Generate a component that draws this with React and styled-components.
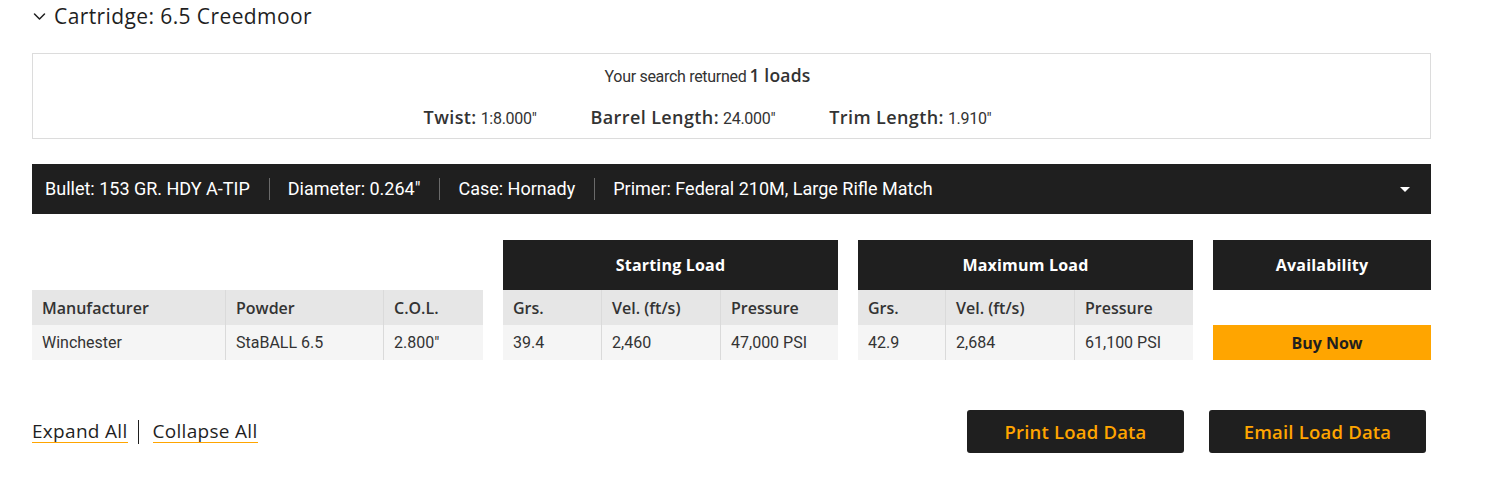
import React from "react";
import styled, { createGlobalStyle } from "styled-components";

const Global = createGlobalStyle`
  html, body { margin: 0; padding: 0; background: #fff; }
  body { font-family: Roboto, "Liberation Sans", sans-serif; color: #333; }
`;

const HEAD = `"Open Sans", "Liberation Sans", sans-serif`;

const Page = styled.div`
  padding: 0 62px 0 32px;
  width: 1399px;
`;

const Title = styled.h2`
  margin: 0;
  height: 32px;
  display: flex;
  align-items: center;
  gap: 7px;
  font-family: ${HEAD};
  font-weight: 500;
  font-size: 21px;
  color: #1f1f1f;
  letter-spacing: 0.4px;
`;

const Summary = styled.div`
  margin-top: 21px;
  border: 1px solid #dcdcdc;
  height: 84px;
  padding-right: 48px;
  display: flex;
  flex-direction: column;
  align-items: center;
`;

const Returned = styled.div`
  margin-top: 9px;
  font-size: 16px;
  color: #333;
  letter-spacing: -0.3px;
  b {
    font-family: ${HEAD};
    font-weight: 600;
    font-size: 17.5px;
    letter-spacing: 0.2px;
    margin-left: 3px;
  }
`;

const Specs = styled.div`
  margin-top: 18px;
  display: flex;
  gap: 54px;
`;

const Spec = styled.div`
  font-size: 16px;
  color: #333;
  letter-spacing: -0.3px;
  b {
    font-family: ${HEAD};
    font-weight: 600;
    font-size: 18px;
    letter-spacing: 0.4px;
    margin-right: 4px;
  }
`;

const InfoBar = styled.div`
  margin-top: 25px;
  height: 50px;
  background: #1f1f1f;
  display: flex;
  align-items: center;
  padding: 0 21px 0 13px;
  color: #fff;
  font-size: 18px;
`;

const InfoItem = styled.span`
  padding: 0 19px 0 18px;
  border-left: 1px solid #6a6a6a;
  line-height: 22px;
  &:first-child { padding-left: 0; border-left: none; }
`;

const Caret = styled.span`
  margin-left: auto;
  width: 0;
  height: 0;
  border-left: 5px solid transparent;
  border-right: 5px solid transparent;
  border-top: 5px solid #fff;
`;

const Tables = styled.div`
  margin-top: 26px;
  display: flex;
  gap: 20px;
`;

const Group = styled.div`
  width: ${(p) => p.$w}px;
  display: flex;
  flex-direction: column;
`;

const GroupHead = styled.div`
  height: 50px;
  background: ${(p) => (p.$blank ? "transparent" : "#1f1f1f")};
  color: #fff;
  display: flex;
  align-items: center;
  justify-content: center;
  font-family: ${HEAD};
  font-weight: 700;
  font-size: 16px;
  letter-spacing: 0.2px;
`;

const Row = styled.div`
  display: grid;
  grid-template-columns: ${(p) => p.$cols};
  height: 35px;
  background: ${(p) => (p.$head ? "#e6e6e6" : "#f5f5f5")};
`;

const Cell = styled.div`
  display: flex;
  align-items: center;
  padding-left: 10px;
  border-left: 1px solid #dadada;
  &:first-child { border-left: none; }
  font-size: 16px;
  color: #333;
  ${(p) =>
    p.$head &&
    `font-family: ${HEAD}; font-weight: 600; font-size: 16px; color: #333;`}
`;

const Spacer = styled.div`
  height: 35px;
`;

const BuyNow = styled.button`
  height: 35px;
  border: none;
  background: #ffa500;
  color: #1f1f1f;
  font-family: ${HEAD};
  font-weight: 700;
  font-size: 16px;
  cursor: pointer;
  padding: 0;
  padding-left: 10px;
`;

const Footer = styled.div`
  margin-top: 50px;
  display: flex;
  align-items: center;
`;

const LinkRow = styled.div`
  display: flex;
  align-items: center;
`;

const TextLink = styled.a`
  font-family: ${HEAD};
  font-weight: 500;
  font-size: 19px;
  letter-spacing: 0.3px;
  color: #1f1f1f;
  text-decoration: none;
  border-bottom: 1.5px solid #ffa500;
  line-height: 22px;
`;

const Divider = styled.span`
  width: 1px;
  height: 24px;
  background: #1f1f1f;
  margin: 0 14px 0 10px;
`;

const Buttons = styled.div`
  margin-left: auto;
  display: flex;
  gap: 25px;
  margin-right: 5px;
`;

const ActionButton = styled.button`
  width: 217px;
  height: 43px;
  border: none;
  border-radius: 3px;
  background: #1f1f1f;
  color: #ffa500;
  font-family: ${HEAD};
  font-weight: 600;
  font-size: 18.5px;
  letter-spacing: 0.2px;
  cursor: pointer;
`;

const Chevron = () => (
  <svg width="15" height="15" viewBox="0 0 24 24" fill="none" stroke="#1f1f1f" strokeWidth="2.4" strokeLinecap="round" strokeLinejoin="round">
    <path d="M4 8l8 8 8-8" />
  </svg>
);

const left = { cols: "193px 158px 100px", head: ["Manufacturer", "Powder", "C.O.L."], row: ["Winchester", "StaBALL 6.5", "2.800\""] };
const start = { title: "Starting Load", cols: "98px 119px 118px", head: ["Grs.", "Vel. (ft/s)", "Pressure"], row: ["39.4", "2,460", "47,000 PSI"] };
const max = { title: "Maximum Load", cols: "87px 129px 119px", head: ["Grs.", "Vel. (ft/s)", "Pressure"], row: ["42.9", "2,684", "61,100 PSI"] };

const DataGroup = ({ w, d }) => (
  <Group $w={w}>
    <GroupHead $blank={!d.title}>{d.title}</GroupHead>
    <Row $head $cols={d.cols}>
      {d.head.map((h) => (
        <Cell $head key={h}>{h}</Cell>
      ))}
    </Row>
    <Row $cols={d.cols}>
      {d.row.map((v) => (
        <Cell key={v}>{v}</Cell>
      ))}
    </Row>
  </Group>
);

export default function App() {
  return (
    <>
      <Global />
      <Page>
        <Title>
          <Chevron />
          Cartridge: 6.5 Creedmoor
        </Title>
        <Summary>
          <Returned>
            Your search returned<b>1 loads</b>
          </Returned>
          <Specs>
            <Spec><b>Twist:</b>1:8.000"</Spec>
            <Spec><b>Barrel Length:</b>24.000"</Spec>
            <Spec><b>Trim Length:</b>1.910"</Spec>
          </Specs>
        </Summary>
        <InfoBar>
          <InfoItem>Bullet: 153 GR. HDY A-TIP</InfoItem>
          <InfoItem>Diameter: 0.264"</InfoItem>
          <InfoItem>Case: Hornady</InfoItem>
          <InfoItem>Primer: Federal 210M, Large Rifle Match</InfoItem>
          <Caret />
        </InfoBar>
        <Tables>
          <DataGroup w={451} d={left} />
          <DataGroup w={335} d={start} />
          <DataGroup w={335} d={max} />
          <Group $w={218}>
            <GroupHead>Availability</GroupHead>
            <Spacer />
            <BuyNow>Buy Now</BuyNow>
          </Group>
        </Tables>
        <Footer>
          <LinkRow>
            <TextLink href="#">Expand All</TextLink>
            <Divider />
            <TextLink href="#">Collapse All</TextLink>
          </LinkRow>
          <Buttons>
            <ActionButton>Print Load Data</ActionButton>
            <ActionButton>Email Load Data</ActionButton>
          </Buttons>
        </Footer>
      </Page>
    </>
  );
}
